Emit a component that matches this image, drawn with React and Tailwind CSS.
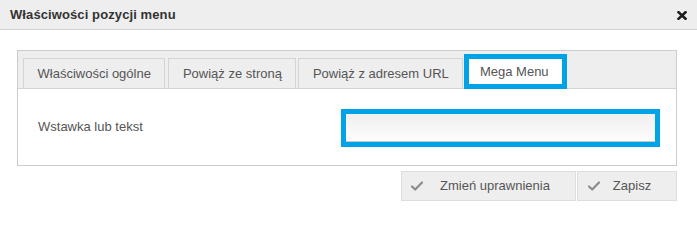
import React from "react";

function Check() {
  return (
    <svg width="12" height="10" viewBox="0 0 12 10" className="shrink-0">
      <path d="M1 5.5 L4.2 8.5 L11 1.5" fill="none" stroke="#8c8c8c" strokeWidth="2.2" strokeLinecap="round" strokeLinejoin="round" />
    </svg>
  );
}

function Tab({ children, className = "" }) {
  return (
    <div className={"h-[30px] flex items-center px-[13.5px] border border-b-0 border-[#d4d4d4] bg-[#eeeeee] text-[#555] whitespace-nowrap " + className}>
      {children}
    </div>
  );
}

export default function App() {
  return (
    <div
      className="w-[697px] h-[215px] bg-white text-[13px] overflow-hidden"
      style={{ fontFamily: '"Liberation Sans", Arial, sans-serif' }}
    >
      <div className="h-[30px] bg-[#eeeeee] border-b border-[#d0d0d0] flex items-center justify-between pl-[10px] pr-[10px]">
        <span className="font-bold text-[#333] tracking-[0.1px]">Właściwości pozycji menu</span>
        <svg width="10" height="9" viewBox="0 0 10 9" className="mt-px">
          <path d="M1.5 1.2 L8.5 7.8 M8.5 1.2 L1.5 7.8" stroke="#1e1e1e" strokeWidth="2.6" strokeLinecap="square" />
        </svg>
      </div>

      <div className="ml-[17px] mt-[20px] w-[660px]">
        <div className="border border-[#cccccc]">
          <div className="bg-[#eeeeee] border-b border-[#d4d4d4] h-[38px] pl-[5px] flex items-end">
            <Tab className="mr-[3px]">Właściwości ogólne</Tab>
            <Tab className="mr-[2px]">Powiąż ze stroną</Tab>
            <Tab className="mr-px">Powiąż z adresem URL</Tab>
            <div className="h-[35px] w-[103px] -mb-px border-[5px] border-[#00a3e6] bg-white flex items-center justify-center pr-[3px] text-[#555] whitespace-nowrap">
              Mega Menu
            </div>
          </div>
          <div className="h-[76px] flex items-center pl-[20px] pr-[16px]">
            <span className="text-[#555] flex-1">Wstawka lub tekst</span>
            <div className="mt-[2px] w-[319px] h-[38px] border-[5px] border-[#00a3e6] bg-white">
              <div className="h-full w-full border-b border-[#c8c8c8] bg-gradient-to-b from-[#efefef] to-[#fdfdfd]" />
            </div>
          </div>
        </div>

        <div className="mt-[5px] flex justify-end gap-px">
          <div className="w-[175px] h-[30px] bg-[#eeeeee] border border-[#dddddd] flex items-center pl-[9px] pr-[8px] text-[#555]">
            <Check />
            <span className="flex-1 text-center whitespace-nowrap">Zmień uprawnienia</span>
          </div>
          <div className="w-[100px] h-[30px] bg-[#eeeeee] border border-[#dddddd] flex items-center pl-[10px] pr-[12px] text-[#555]">
            <Check />
            <span className="flex-1 text-center whitespace-nowrap">Zapisz</span>
          </div>
        </div>
      </div>
    </div>
  );
}
